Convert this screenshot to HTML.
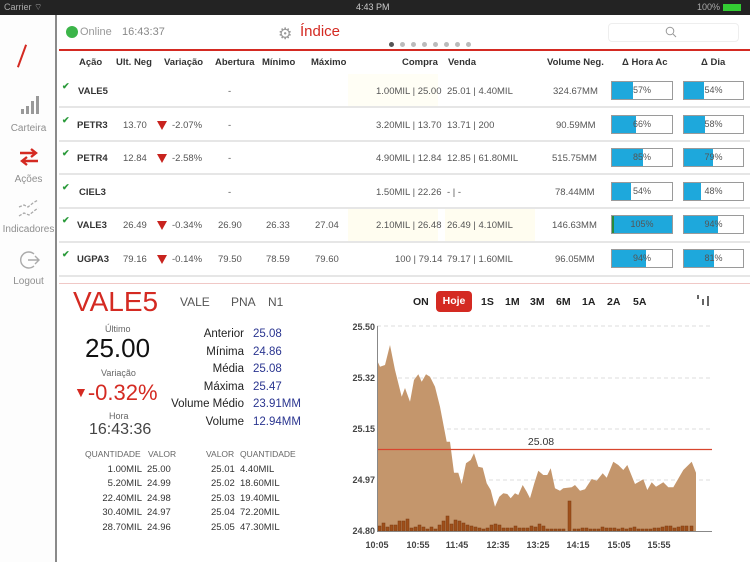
<!DOCTYPE html>
<html><head><meta charset="utf-8">
<style>
*{margin:0;padding:0;box-sizing:border-box}
body{width:750px;height:562px;overflow:hidden;background:#fff;font-family:"Liberation Sans",sans-serif;position:relative;color:#333}
.a{position:absolute;white-space:nowrap}
.sb{position:absolute;left:0;top:0;width:750px;height:15px;background:#232323;color:#aaa;font-size:9px}
.side{position:absolute;left:0;top:15px;width:57px;height:547px;background:#fdfdfd;border-right:2px solid #8a8a8a}
.sl{font-size:10px;color:#8f8f8f;width:57px;text-align:center;left:0}
.th{font-size:9.5px;font-weight:bold;color:#333;top:57px}
.td{font-size:9.5px;color:#555}
.tk{font-size:9.5px;font-weight:bold;color:#333}
.sep{position:absolute;left:59px;width:691px;height:2px;background:#e6e6e6}
.bar{position:absolute;height:19px;border:1px solid #9a9a9a;background:#fff}
.bar i{position:absolute;left:0;top:0;bottom:0;background:#1ea8dc}
.bar b{position:absolute;left:0;right:0;top:3px;text-align:center;font-size:9px;color:#555;font-weight:normal}
.tri{display:block;width:0;height:0;border-left:5px solid transparent;border-right:5px solid transparent;border-top:9px solid #c8231e}
.ck{color:#2a9a3a;font-size:9px;font-weight:bold}
.btn{font-size:10.5px;font-weight:bold;color:#222;top:296px}
.st{font-size:11.5px;color:#222;text-align:right;width:140px;left:104px}
.sv{font-size:11.5px;color:#2a3590;left:253px}
.bk{font-size:9.5px;color:#333}
</style></head><body>
<div class="sb"><span class="a" style="left:4px;top:2px">Carrier ︎⌔</span><span class="a" style="left:356px;top:2px;color:#ccc">4:43 PM</span><span class="a" style="left:697px;top:2px">100%</span><span class="a" style="left:723px;top:4px;width:18px;height:7px;background:#3c3"></span></div>

<div class="side">
<div class="a" style="left:21px;top:29px;width:2px;height:24px;background:#d42a22;transform:rotate(20deg)"></div>
<svg class="a" style="left:20px;top:80px" width="20" height="20"><rect x="1" y="14" width="3" height="5" fill="#999"/><rect x="6" y="11" width="3" height="8" fill="#999"/><rect x="11" y="6" width="3" height="13" fill="#999"/><rect x="16" y="1" width="3" height="18" fill="#999"/></svg>
<div class="a sl" style="top:108px">Carteira</div>
<svg class="a" style="left:18px;top:133px" width="22" height="18"><path d="M2 5h16M13 1l5 4-5 4" stroke="#d42a22" stroke-width="2.4" fill="none"/><path d="M20 13H4M9 9l-5 4 5 4" stroke="#d42a22" stroke-width="2.4" fill="none"/></svg>
<div class="a sl" style="top:159px">Ações</div>
<svg class="a" style="left:17px;top:183px" width="24" height="22"><path d="M2 9l5-2 4 2 5-4 5-3M2 18l5-3 5 2 5-4 4-3" stroke="#aaa" stroke-width="1.3" fill="none" stroke-dasharray="3 1.5"/></svg>
<div class="a sl" style="top:209px">Indicadores</div>
<svg class="a" style="left:19px;top:234px" width="22" height="22"><path d="M15 5A8 8 0 1 0 15 17" stroke="#aaa" stroke-width="1.4" fill="none"/><path d="M9 11h11M16 7l4 4-4 4" stroke="#aaa" stroke-width="1.4" fill="none"/></svg>
<div class="a sl" style="top:261px">Logout</div>
</div>

<div class="a" style="left:66px;top:26px;width:12px;height:12px;border-radius:50%;background:#3cb54a"></div>
<div class="a" style="left:80px;top:26px;font-size:11px;color:#999">Online</div>
<div class="a" style="left:122px;top:26px;font-size:11px;color:#888">16:43:37</div>
<div class="a" style="left:278px;top:24px;font-size:16px;color:#999">⚙</div>
<div class="a" style="left:300px;top:23px;font-size:15px;color:#d42a22">Índice</div>
<div class="a" style="left:389px;top:42px;font-size:0">
<span style="display:inline-block;width:5px;height:5px;border-radius:50%;background:#555;margin-right:6px"></span><span style="display:inline-block;width:5px;height:5px;border-radius:50%;background:#bbb;margin-right:6px"></span><span style="display:inline-block;width:5px;height:5px;border-radius:50%;background:#bbb;margin-right:6px"></span><span style="display:inline-block;width:5px;height:5px;border-radius:50%;background:#bbb;margin-right:6px"></span><span style="display:inline-block;width:5px;height:5px;border-radius:50%;background:#bbb;margin-right:6px"></span><span style="display:inline-block;width:5px;height:5px;border-radius:50%;background:#bbb;margin-right:6px"></span><span style="display:inline-block;width:5px;height:5px;border-radius:50%;background:#bbb;margin-right:6px"></span><span style="display:inline-block;width:5px;height:5px;border-radius:50%;background:#bbb"></span></div>
<div class="a" style="left:608px;top:23px;width:131px;height:19px;border:1px solid #eee;border-radius:4px"></div>
<svg class="a" style="left:665px;top:26px" width="12" height="12"><circle cx="5" cy="5" r="3.8" stroke="#999" fill="none"/><path d="M8 8l3 3" stroke="#999"/></svg>
<div class="a" style="left:59px;top:49px;width:691px;height:2px;background:#d42a22"></div>

<div class="a th" style="left:79px">Ação</div>
<div class="a th" style="left:116px">Ult. Neg</div>
<div class="a th" style="left:164px">Variação</div>
<div class="a th" style="left:215px">Abertura</div>
<div class="a th" style="left:262px">Mínimo</div>
<div class="a th" style="left:311px">Máximo</div>
<div class="a th" style="left:402px">Compra</div>
<div class="a th" style="left:448px">Venda</div>
<div class="a th" style="left:547px">Volume Neg.</div>
<div class="a th" style="left:622px">Δ Hora Ac</div>
<div class="a th" style="left:701px">Δ Dia</div>

<div class="a" style="left:348px;top:74px;width:90px;height:33px;background:#fffef5"></div>
<div class="a" style="left:348px;top:208px;width:90px;height:34px;background:#fffdf0"></div>
<div class="a" style="left:445px;top:208px;width:90px;height:34px;background:#fffdf0"></div>

<div class="sep" style="top:106px"></div><div class="sep" style="top:140px"></div><div class="sep" style="top:173px"></div><div class="sep" style="top:207px"></div><div class="sep" style="top:241px"></div><div class="sep" style="top:275px"></div>

<div class="a ck" style="left:62px;top:81px">✔</div><div class="a tk" style="left:78px;top:86px">VALE5</div><div class="a td" style="left:228px;top:86px">-</div><div class="a td" style="left:376px;top:86px">1.00MIL | 25.00</div><div class="a td" style="left:447px;top:86px">25.01 | 4.40MIL</div><div class="a td" style="left:553px;top:86px">324.67MM</div>
<div class="bar" style="left:611px;top:81px;width:62px"><i style="width:21px"></i><b>57%</b></div><div class="bar" style="left:683px;top:81px;width:61px"><i style="width:20px"></i><b>54%</b></div>

<div class="a ck" style="left:62px;top:115px">✔</div><div class="a tk" style="left:77px;top:120px">PETR3</div><div class="a td" style="left:123px;top:120px">13.70</div><div class="a" style="left:157px;top:121px"><span class="tri"></span></div><div class="a td" style="left:172px;top:120px">-2.07%</div><div class="a td" style="left:228px;top:120px">-</div><div class="a td" style="left:376px;top:120px">3.20MIL | 13.70</div><div class="a td" style="left:447px;top:120px">13.71 | 200</div><div class="a td" style="left:556px;top:120px">90.59MM</div>
<div class="bar" style="left:611px;top:115px;width:62px"><i style="width:24px"></i><b>66%</b></div><div class="bar" style="left:683px;top:115px;width:61px"><i style="width:21px"></i><b>58%</b></div>

<div class="a ck" style="left:62px;top:148px">✔</div><div class="a tk" style="left:77px;top:153px">PETR4</div><div class="a td" style="left:123px;top:153px">12.84</div><div class="a" style="left:157px;top:154px"><span class="tri"></span></div><div class="a td" style="left:172px;top:153px">-2.58%</div><div class="a td" style="left:228px;top:153px">-</div><div class="a td" style="left:376px;top:153px">4.90MIL | 12.84</div><div class="a td" style="left:447px;top:153px">12.85 | 61.80MIL</div><div class="a td" style="left:552px;top:153px">515.75MM</div>
<div class="bar" style="left:611px;top:148px;width:62px"><i style="width:31px"></i><b>85%</b></div><div class="bar" style="left:683px;top:148px;width:61px"><i style="width:29px"></i><b>79%</b></div>

<div class="a ck" style="left:62px;top:182px">✔</div><div class="a tk" style="left:79px;top:187px">CIEL3</div><div class="a td" style="left:228px;top:187px">-</div><div class="a td" style="left:376px;top:187px">1.50MIL | 22.26</div><div class="a td" style="left:447px;top:187px">- | -</div><div class="a td" style="left:555px;top:187px">78.44MM</div>
<div class="bar" style="left:611px;top:182px;width:62px"><i style="width:19px"></i><b>54%</b></div><div class="bar" style="left:683px;top:182px;width:61px"><i style="width:17px"></i><b>48%</b></div>

<div class="a ck" style="left:62px;top:215px">✔</div><div class="a tk" style="left:77px;top:220px">VALE3</div><div class="a td" style="left:123px;top:220px">26.49</div><div class="a" style="left:157px;top:221px"><span class="tri"></span></div><div class="a td" style="left:172px;top:220px">-0.34%</div><div class="a td" style="left:218px;top:220px">26.90</div><div class="a td" style="left:266px;top:220px">26.33</div><div class="a td" style="left:315px;top:220px">27.04</div><div class="a td" style="left:376px;top:220px">2.10MIL | 26.48</div><div class="a td" style="left:447px;top:220px">26.49 | 4.10MIL</div><div class="a td" style="left:552px;top:220px">146.63MM</div>
<div class="bar" style="left:611px;top:215px;width:62px"><i style="width:60px;border-left:2px solid #2a8a3a"></i><b>105%</b></div><div class="bar" style="left:683px;top:215px;width:61px"><i style="width:34px"></i><b>94%</b></div>

<div class="a ck" style="left:62px;top:249px">✔</div><div class="a tk" style="left:77px;top:254px">UGPA3</div><div class="a td" style="left:123px;top:254px">79.16</div><div class="a" style="left:157px;top:255px"><span class="tri"></span></div><div class="a td" style="left:172px;top:254px">-0.14%</div><div class="a td" style="left:218px;top:254px">79.50</div><div class="a td" style="left:266px;top:254px">78.59</div><div class="a td" style="left:315px;top:254px">79.60</div><div class="a td" style="left:395px;top:254px">100 | 79.14</div><div class="a td" style="left:447px;top:254px">79.17 | 1.60MIL</div><div class="a td" style="left:555px;top:254px">96.05MM</div>
<div class="bar" style="left:611px;top:249px;width:62px"><i style="width:34px"></i><b>94%</b></div><div class="bar" style="left:683px;top:249px;width:61px"><i style="width:30px"></i><b>81%</b></div>

<div class="a" style="left:59px;top:283px;width:691px;height:1px;background:#f0c8c6"></div>

<div class="a" style="left:73px;top:286px;font-size:28px;color:#d42a22">VALE5</div>
<div class="a" style="left:180px;top:295px;font-size:12px;color:#555">VALE</div>
<div class="a" style="left:231px;top:295px;font-size:12px;color:#555">PNA</div>
<div class="a" style="left:268px;top:295px;font-size:12px;color:#555">N1</div>
<div class="a" style="left:105px;top:324px;font-size:9px;color:#666">Último</div>
<div class="a" style="left:85px;top:333px;font-size:26px;color:#111">25.00</div>
<div class="a" style="left:101px;top:368px;font-size:9px;color:#666">Variação</div>
<div class="a" style="left:74px;top:380px;font-size:22px;color:#d42a22"><span style="font-size:14px;position:relative;top:-3px">▼</span>-0.32%</div>
<div class="a" style="left:109px;top:411px;font-size:9px;color:#666">Hora</div>
<div class="a" style="left:89px;top:421px;font-size:16px;color:#444">16:43:36</div>

<div class="a st" style="top:328px">Anterior</div><div class="a sv" style="top:328px">25.08</div>
<div class="a st" style="top:346px">Mínima</div><div class="a sv" style="top:346px">24.86</div>
<div class="a st" style="top:363px">Média</div><div class="a sv" style="top:363px">25.08</div>
<div class="a st" style="top:381px">Máxima</div><div class="a sv" style="top:381px">25.47</div>
<div class="a st" style="top:398px">Volume Médio</div><div class="a sv" style="top:398px">23.91MM</div>
<div class="a st" style="top:416px">Volume</div><div class="a sv" style="top:416px">12.94MM</div>

<div class="a bk" style="left:85px;top:449px;color:#666;font-size:8.5px">QUANTIDADE</div><div class="a bk" style="left:148px;top:449px;color:#666;font-size:8.5px">VALOR</div><div class="a bk" style="left:206px;top:449px;color:#666;font-size:8.5px">VALOR</div><div class="a bk" style="left:240px;top:449px;color:#666;font-size:8.5px">QUANTIDADE</div>
<div class="a bk" style="left:60px;top:464px;width:82px;text-align:right">1.00MIL</div><div class="a bk" style="left:147px;top:464px">25.00</div><div class="a bk" style="left:211px;top:464px">25.01</div><div class="a bk" style="left:240px;top:464px">4.40MIL</div>
<div class="a bk" style="left:60px;top:478px;width:82px;text-align:right">5.20MIL</div><div class="a bk" style="left:147px;top:478px">24.99</div><div class="a bk" style="left:211px;top:478px">25.02</div><div class="a bk" style="left:240px;top:478px">18.60MIL</div>
<div class="a bk" style="left:60px;top:493px;width:82px;text-align:right">22.40MIL</div><div class="a bk" style="left:147px;top:493px">24.98</div><div class="a bk" style="left:211px;top:493px">25.03</div><div class="a bk" style="left:240px;top:493px">19.40MIL</div>
<div class="a bk" style="left:60px;top:507px;width:82px;text-align:right">30.40MIL</div><div class="a bk" style="left:147px;top:507px">24.97</div><div class="a bk" style="left:211px;top:507px">25.04</div><div class="a bk" style="left:240px;top:507px">72.20MIL</div>
<div class="a bk" style="left:60px;top:522px;width:82px;text-align:right">28.70MIL</div><div class="a bk" style="left:147px;top:522px">24.96</div><div class="a bk" style="left:211px;top:522px">25.05</div><div class="a bk" style="left:240px;top:522px">47.30MIL</div>

<div class="a btn" style="left:413px">ON</div>
<div class="a" style="left:436px;top:291px;width:36px;height:21px;background:#d42a22;border-radius:4px;color:#fff;font-size:10.5px;font-weight:bold;text-align:center;line-height:21px">Hoje</div>
<div class="a btn" style="left:481px">1S</div><div class="a btn" style="left:505px">1M</div><div class="a btn" style="left:530px">3M</div><div class="a btn" style="left:556px">6M</div><div class="a btn" style="left:582px">1A</div><div class="a btn" style="left:607px">2A</div><div class="a btn" style="left:633px">5A</div>
<svg class="a" style="left:696px;top:294px" width="14" height="14"><path d="M2 1v4M7 5v6M12 2v10" stroke="#333" stroke-width="1.5"/></svg>

<svg class="a" style="left:340px;top:315px" width="410" height="240" viewBox="340 315 410 240">
<g stroke="#ddd" stroke-dasharray="4 3"><line x1="377" y1="326" x2="712" y2="326"/><line x1="377" y1="378" x2="712" y2="378"/><line x1="377" y1="429" x2="712" y2="429"/><line x1="377" y1="480" x2="712" y2="480"/></g>
<path fill="#c4966c" d="M377.7 531 L377.7 361.7 380 366.7 385 365 390 345 395 370 401.7 396.7 405 388 410 401.7 414 380 418.3 374.3 421.7 381.7 426 374.3 430 376.7 435 386.7 440 406.7 446.7 441.7 450 441.7 454 472.7 458.3 472.7 461.7 484 466 463.3 470.7 460 474 453.3 478.3 466.7 482.7 467.7 486.7 483.3 490.7 490 495 506.7 499.3 496.7 503.3 493.3 507.3 494 510.7 498.3 515 493.3 518.3 495 522.7 485 526.7 491.7 530 498.3 534.3 483.3 538.3 470.7 543.3 475 547.3 475 550.7 468.3 555 488.3 560 490.7 563.3 488.3 571.7 487.3 575 485 580 490.7 585 489.3 591.7 479 596.7 480.7 602.7 473.3 606.7 477.7 613.3 461.7 618.3 465 623.3 470 627.3 465 635 484 643.3 479.3 647.3 490 651.7 482.3 656 486.7 663.3 482.3 668.3 487.3 673.3 487.3 683.3 470 691.7 461.7 696 472.7 696 531 Z"/>
<g fill="#a0501a" stroke="#7a3a10" stroke-width="0.5">
<rect x="378" y="526" width="3" height="5"/><rect x="382" y="523" width="3" height="8"/><rect x="386" y="527" width="3" height="4"/><rect x="390" y="525" width="3" height="6"/><rect x="394" y="525" width="3" height="6"/><rect x="398" y="521" width="3" height="10"/><rect x="402" y="521" width="3" height="10"/><rect x="406" y="519" width="3" height="12"/><rect x="410" y="528" width="3" height="3"/><rect x="414" y="527" width="3" height="4"/><rect x="418" y="525" width="3" height="6"/><rect x="422" y="527" width="3" height="4"/><rect x="426" y="529" width="3" height="2"/><rect x="430" y="527" width="3" height="4"/><rect x="434" y="529" width="3" height="2"/><rect x="438" y="525" width="3" height="6"/><rect x="442" y="521" width="3" height="10"/><rect x="446" y="516" width="3" height="15"/><rect x="450" y="524" width="3" height="7"/><rect x="454" y="520" width="3" height="11"/><rect x="458" y="521" width="3" height="10"/><rect x="462" y="523" width="3" height="8"/><rect x="466" y="525" width="3" height="6"/><rect x="470" y="526" width="3" height="5"/><rect x="474" y="527" width="3" height="4"/><rect x="478" y="528" width="3" height="3"/><rect x="482" y="529" width="3" height="2"/><rect x="486" y="528" width="3" height="3"/><rect x="490" y="525" width="3" height="6"/><rect x="494" y="524" width="3" height="7"/><rect x="498" y="525" width="3" height="6"/><rect x="502" y="528" width="3" height="3"/><rect x="506" y="528" width="3" height="3"/><rect x="510" y="528" width="3" height="3"/><rect x="514" y="526" width="3" height="5"/><rect x="518" y="528" width="3" height="3"/><rect x="522" y="528" width="3" height="3"/><rect x="526" y="528" width="3" height="3"/><rect x="530" y="526" width="3" height="5"/><rect x="534" y="527" width="3" height="4"/><rect x="538" y="524" width="3" height="7"/><rect x="542" y="526" width="3" height="5"/><rect x="546" y="529" width="3" height="2"/><rect x="550" y="529" width="3" height="2"/><rect x="554" y="529" width="3" height="2"/><rect x="558" y="529" width="3" height="2"/><rect x="562" y="529" width="3" height="2"/><rect x="568" y="501" width="3" height="30"/><rect x="573" y="529" width="3" height="2"/><rect x="577" y="529" width="3" height="2"/><rect x="581" y="528" width="3" height="3"/><rect x="585" y="528" width="3" height="3"/><rect x="589" y="529" width="3" height="2"/><rect x="593" y="529" width="3" height="2"/><rect x="597" y="529" width="3" height="2"/><rect x="601" y="527" width="3" height="4"/><rect x="605" y="528" width="3" height="3"/><rect x="609" y="528" width="3" height="3"/><rect x="613" y="528" width="3" height="3"/><rect x="617" y="529" width="3" height="2"/><rect x="621" y="528" width="3" height="3"/><rect x="625" y="529" width="3" height="2"/><rect x="629" y="528" width="3" height="3"/><rect x="633" y="527" width="3" height="4"/><rect x="637" y="529" width="3" height="2"/><rect x="641" y="529" width="3" height="2"/><rect x="645" y="529" width="3" height="2"/><rect x="649" y="529" width="3" height="2"/><rect x="653" y="528" width="3" height="3"/><rect x="657" y="528" width="3" height="3"/><rect x="661" y="527" width="3" height="4"/><rect x="665" y="526" width="3" height="5"/><rect x="669" y="526" width="3" height="5"/><rect x="673" y="528" width="3" height="3"/><rect x="677" y="527" width="3" height="4"/><rect x="681" y="526" width="3" height="5"/><rect x="685" y="526" width="3" height="5"/><rect x="690" y="526" width="3" height="5"/>
</g>
<line x1="377" y1="449.5" x2="712" y2="449.5" stroke="#d8452e" stroke-width="1.2"/>
<text x="541" y="445" font-family="Liberation Sans" font-size="10.5" fill="#333" text-anchor="middle">25.08</text>
<line x1="377.5" y1="326" x2="377.5" y2="531" stroke="#888"/>
<line x1="377" y1="531.5" x2="712" y2="531.5" stroke="#888"/>
<g font-family="Liberation Sans" font-size="9" font-weight="bold" fill="#444" text-anchor="end"><text x="375" y="330">25.50</text><text x="375" y="381">25.32</text><text x="375" y="432">25.15</text><text x="375" y="483">24.97</text><text x="375" y="534">24.80</text></g>
<g font-family="Liberation Sans" font-size="9" font-weight="bold" fill="#444" text-anchor="middle"><text x="377" y="548">10:05</text><text x="418" y="548">10:55</text><text x="457" y="548">11:45</text><text x="498" y="548">12:35</text><text x="538" y="548">13:25</text><text x="578" y="548">14:15</text><text x="619" y="548">15:05</text><text x="659" y="548">15:55</text></g>
</svg>
</body></html>
